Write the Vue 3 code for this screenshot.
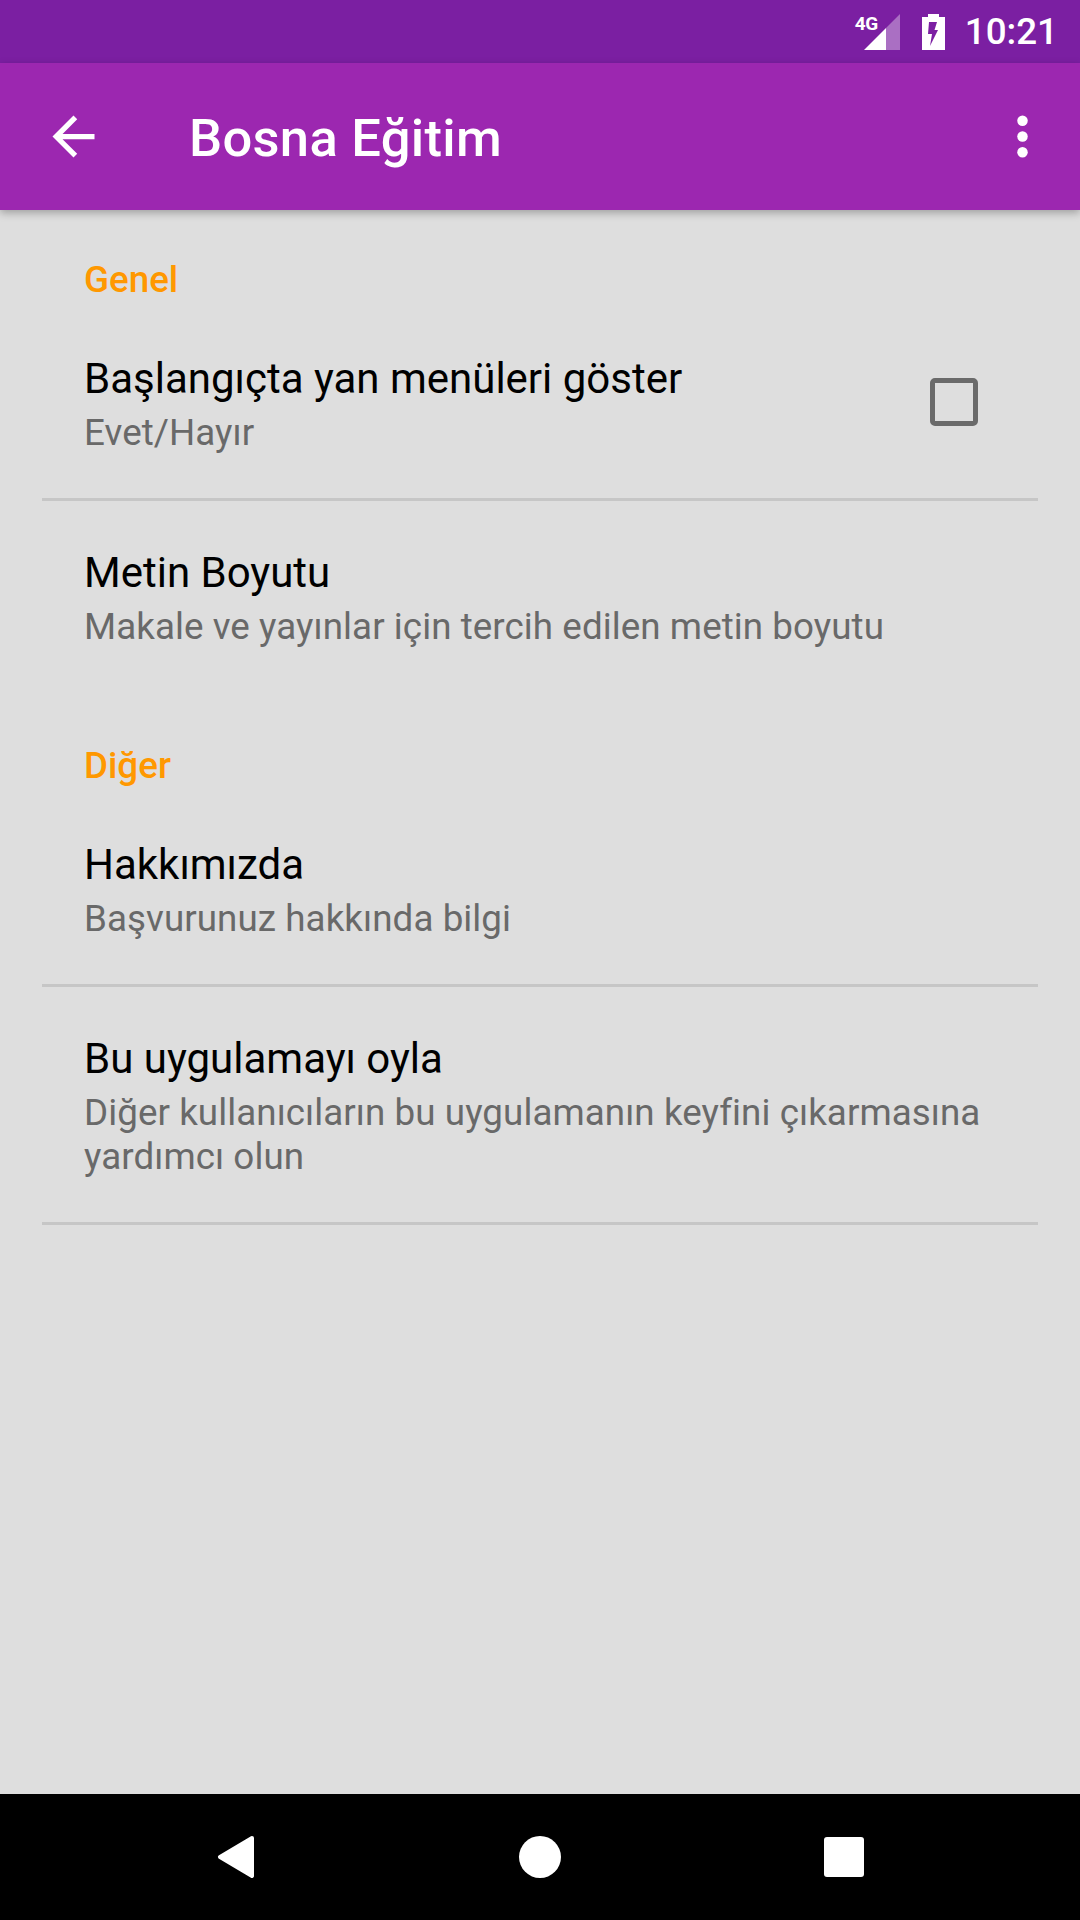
<script setup>
const groups = [
  {
    name: 'Genel',
    rows: [
      { title: 'Başlangıçta yan menüleri göster', summary: 'Evet/Hayır', toggle: true, divider: true },
      { title: 'Metin Boyutu', summary: 'Makale ve yayınlar için tercih edilen metin boyutu' },
    ],
  },
  {
    name: 'Diğer',
    rows: [
      { title: 'Hakkımızda', summary: 'Başvurunuz hakkında bilgi', divider: true },
      { title: 'Bu uygulamayı oyla', summary: 'Diğer kullanıcıların bu uygulamanın keyfini çıkarmasına yardımcı olun', divider: true },
    ],
  },
]
</script>

<template>
  <div class="screen">
    <div class="status">
      <div class="signal">
        <svg width="36" height="36" viewBox="0 0 36 36">
          <path d="M36 0V36H22V14z" fill="#fff" fill-opacity=".36" />
          <path d="M22 14V36H0z" fill="#fff" />
        </svg>
        <span class="network">4G</span>
      </div>
      <svg class="battery" width="23" height="36" viewBox="0 0 23 36">
        <path d="M6 0H17V3H23V36H0V3H6z" fill="#fff" />
        <path d="M7 8H15L12.500 16H16L8 32 10 20H6z" fill="#7b1fa2" />
      </svg>
      <span class="clock">10:21</span>
    </div>

    <header class="toolbar">
      <svg class="icon" width="63" height="63" viewBox="0 0 24 24">
        <path d="M20 11H7.830l5.590-5.590L12 4l-8 8 8 8 1.410-1.410L7.830 13H20v-2z" fill="#fff" />
      </svg>
      <h1 class="title">Bosna Eğitim</h1>
      <svg class="icon" width="63" height="63" viewBox="0 0 24 24">
        <circle cx="12" cy="6" r="2" fill="#fff" />
        <circle cx="12" cy="12" r="2" fill="#fff" />
        <circle cx="12" cy="18" r="2" fill="#fff" />
      </svg>
    </header>

    <main class="prefs">
      <section v-for="group in groups" :key="group.name" class="group">
        <h2 class="group-name">{{ group.name }}</h2>
        <div v-for="row in group.rows" :key="row.title" class="row" :class="{ ruled: row.divider }">
          <div class="row-text">
            <div class="row-title">{{ row.title }}</div>
            <div class="row-summary">{{ row.summary }}</div>
          </div>
          <span v-if="row.toggle" class="box"></span>
        </div>
      </section>
    </main>

    <nav class="nav">
      <svg width="40" height="42" viewBox="0 0 40 42">
        <path d="M36 2 4 21 36 40z" fill="#fff" stroke="#fff" stroke-width="4" stroke-linejoin="round" />
      </svg>
      <span class="home"></span>
      <span class="recents"></span>
    </nav>
  </div>
</template>

<style>
html, body {
  margin: 0;
  background: #dedede;
}
</style>

<style scoped>
.screen {
  width: 1080px;
  height: 1920px;
  display: flex;
  flex-direction: column;
  background: #dedede;
  font-family: Roboto, "Noto Sans", sans-serif;
  overflow: hidden;
}

.status {
  height: 63px;
  flex: none;
  display: flex;
  align-items: center;
  justify-content: flex-end;
  padding-right: 22px;
  background: #7b1fa2;
  color: #fff;
}

.signal {
  position: relative;
  width: 45px;
  height: 36px;
  display: flex;
  justify-content: flex-end;
}

.network {
  position: absolute;
  left: 0;
  top: 1px;
  font-size: 19px;
  line-height: 18px;
  font-weight: 700;
  letter-spacing: -0.5px;
}

.battery {
  margin-left: 22px;
}

.clock {
  margin-left: 20px;
  font-size: 36.75px;
  font-weight: 500;
  line-height: 43px;
}

.toolbar {
  position: relative;
  z-index: 1;
  height: 147px;
  flex: none;
  display: flex;
  align-items: center;
  padding: 0 26px 0 42px;
  background: #9c27b0;
  box-shadow: 0 3px 8px rgba(0, 0, 0, 0.28);
}

.icon {
  flex: none;
}

.title {
  flex: 1;
  margin: 2px 0 0 84px;
  color: #fff;
  font-size: 52.5px;
  font-weight: 500;
  line-height: 62px;
  letter-spacing: 0.3px;
}

.prefs {
  flex: 1;
  padding-top: 43px;
}

.group + .group {
  margin-top: 44px;
}

.group-name {
  margin: 0;
  padding-left: 84px;
  height: 54px;
  color: #ff9800;
  font-size: 36.75px;
  font-weight: 500;
  line-height: 54px;
}

.row {
  margin: 0 42px;
  padding: 47px 42px 43px;
  display: flex;
  align-items: center;
  border-bottom: 3px solid transparent;
}

.ruled {
  border-bottom-color: #c6c6c6;
}

.row-text {
  flex: 1;
  min-width: 0;
}

.row-title {
  color: #000;
  font-size: 42px;
  line-height: 50px;
}

.row-summary {
  margin-top: 7px;
  color: #696969;
  font-size: 36.75px;
  line-height: 44px;
  letter-spacing: 0.07px;
}

.box {
  flex: none;
  width: 38px;
  height: 38px;
  margin: 0 18px 5px 0;
  border: 5px solid #6a6a6a;
  border-radius: 5px;
}

.nav {
  height: 126px;
  flex: none;
  display: flex;
  align-items: center;
  background: #000;
  padding: 0 216px;
  justify-content: space-between;
}

.home {
  width: 42px;
  height: 42px;
  border-radius: 50%;
  background: #fff;
}

.recents {
  width: 40px;
  height: 40px;
  border-radius: 3px;
  background: #fff;
}
</style>
